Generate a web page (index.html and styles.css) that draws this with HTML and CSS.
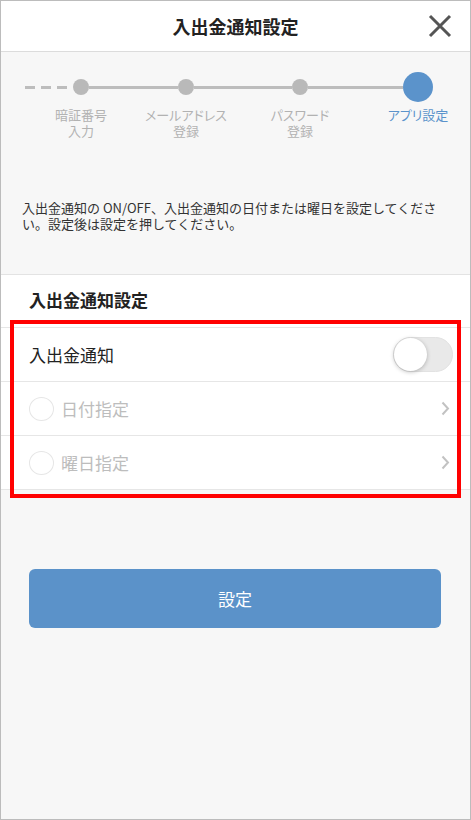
FILE: index.html
```html
<!DOCTYPE html>
<html lang="ja">
<head>
    <meta charset="UTF-8" />
    <meta name="viewport" content="width=device-width, initial-scale=1.0" />
    <title>入出金通知設定</title>
    <link rel="stylesheet" href="styles.css">
</head>
<body>
    <div class="screen">
        <!-- Header -->
        <header class="header">
            <h1 class="header-title">入出金通知設定</h1>
            <button class="close-btn" type="button" aria-label="閉じる">
                <svg width="24" height="24" viewBox="0 0 24 24">
                    <path d="M2 2 L22 22 M22 2 L2 22" stroke="#555" stroke-width="3" fill="none" />
                </svg>
            </button>
        </header>

        <!-- Steps -->
        <section class="steps">
            <div class="steps-track">
                <span class="track-dash"></span>
                <span class="step-dot"></span>
                <span class="track-line line-1"></span>
                <span class="step-dot"></span>
                <span class="track-line line-2"></span>
                <span class="step-dot"></span>
                <span class="track-line line-3"></span>
                <span class="step-dot step-dot-active"></span>
            </div>
            <div class="steps-labels">
                <div class="step-label"><span>暗証番号</span><span>入力</span></div>
                <div class="step-label"><span>メールアドレス</span><span>登録</span></div>
                <div class="step-label"><span>パスワード</span><span>登録</span></div>
                <div class="step-label step-label-active"><span>アプリ設定</span></div>
            </div>
            <p class="steps-text">入出金通知の ON/OFF、入出金通知の日付または曜日を設定してください。設定後は設定を押してください。</p>
        </section>

        <!-- Settings -->
        <section class="settings">
            <h2 class="settings-title">入出金通知設定</h2>
            <div class="settings-list">
                <div class="settings-row">
                    <span class="row-label">入出金通知</span>
                    <span class="toggle"><span class="toggle-knob"></span></span>
                </div>
                <div class="settings-row row-disabled">
                    <span class="radio"></span>
                    <span class="row-label">日付指定</span>
                    <svg class="chevron" width="9" height="15" viewBox="0 0 9 15">
                        <path d="M1.5 1.5 L7 7.5 L1.5 13.5" stroke="#c2c2c2" stroke-width="2" fill="none" />
                    </svg>
                </div>
                <div class="settings-row row-disabled">
                    <span class="radio"></span>
                    <span class="row-label">曜日指定</span>
                    <svg class="chevron" width="9" height="15" viewBox="0 0 9 15">
                        <path d="M1.5 1.5 L7 7.5 L1.5 13.5" stroke="#c2c2c2" stroke-width="2" fill="none" />
                    </svg>
                </div>
                <span class="highlight"></span>
            </div>
        </section>

        <div class="actions">
            <button class="btn-main" type="button">設定</button>
        </div>
    </div>
</body>
</html>
```

FILE: styles.css
```css
/* Global CSS */
*,
*::before,
*::after {
    box-sizing: border-box;
}

html,
body {
    margin: 0;
    padding: 0;
}

body {
    font-family: 'Noto Sans CJK JP', 'Noto Sans', sans-serif;
    color: #222;
    background: #fff;
}

.screen {
    width: 471px;
    height: 820px;
    border: 1px solid #bcbcbc;
    background-color: #f7f7f7;
    overflow: hidden;
}

/* Header */
.header {
    display: flex;
    align-items: center;
    justify-content: center;
    position: relative;
    height: 51px;
    background-color: #fff;
    border-bottom: 1px solid #dcdcdc;
}

.header-title {
    margin: 0;
    font-size: 18px;
    font-weight: 700;
    line-height: 1;
}

.close-btn {
    position: absolute;
    right: 18px;
    top: 13px;
    width: 24px;
    height: 24px;
    padding: 0;
    border: none;
    background: none;
}

.close-btn svg {
    display: block;
}

/* Steps */
.steps {
    padding: 20px 0 42px;
}

.steps-track {
    display: flex;
    align-items: center;
    height: 30px;
    padding-left: 24px;
}

.track-dash {
    width: 48px;
    height: 3px;
    background: repeating-linear-gradient(to right, #bdbdbd 0, #bdbdbd 10px, transparent 10px, transparent 16px);
}

.track-line {
    height: 3px;
    background-color: #bdbdbd;
}

.line-1 {
    width: 89px;
}

.line-2 {
    width: 98px;
}

.line-3 {
    width: 95px;
}

.step-dot {
    width: 16px;
    height: 16px;
    border-radius: 50%;
    background-color: #b9b9b9;
}

.step-dot-active {
    width: 30px;
    height: 30px;
    background-color: #5b93cb;
}

.steps-labels {
    display: grid;
    grid-template-columns: 122px 88px 140px 96px;
    padding-left: 19px;
    margin-top: 5px;
}

.step-label {
    display: flex;
    flex-direction: column;
    align-items: center;
    font-size: 13px;
    line-height: 16px;
    color: #b2b2b2;
    white-space: nowrap;
    font-feature-settings: "palt";
}

.step-label span {
    display: block;
    height: 16px;
}

.step-label-active {
    color: #5b93cb;
}

.steps-text {
    margin: 61px 0 0;
    padding: 0 20px 0 21px;
    font-size: 13px;
    line-height: 16px;
    color: #333;
}

/* Settings */
.settings {
    background-color: #fff;
    border-top: 1px solid #e3e3e3;
}

.settings-title {
    margin: 0;
    padding: 13px 28px 15px;
    font-size: 17px;
    font-weight: 700;
    line-height: 24px;
}

.settings-list {
    position: relative;
    border-top: 1px solid #e6e6e6;
}

.settings-row {
    display: flex;
    align-items: center;
    height: 54px;
    padding: 0 17px 0 28px;
    border-bottom: 1px solid #e6e6e6;
}

.row-label {
    flex: 1;
    font-size: 17px;
    line-height: 24px;
}

.row-disabled .row-label {
    color: #bdbdbd;
}

.radio {
    width: 25px;
    height: 24px;
    margin-right: 7px;
    border: 1.5px solid #e6e6e6;
    border-radius: 50%;
}

.chevron {
    display: block;
    margin-right: 3px;
}

.toggle {
    position: relative;
    width: 60px;
    height: 35px;
    border-radius: 18px;
    background-color: #e9e9e9;
    border: 1px solid #e2e2e2;
}

.toggle-knob {
    position: absolute;
    left: 0;
    top: 0;
    width: 33px;
    height: 33px;
    border-radius: 50%;
    background-color: #fff;
    box-shadow: 0 1px 4px rgba(0, 0, 0, 0.25);
}

.highlight {
    position: absolute;
    top: -8px;
    bottom: -8px;
    left: 9px;
    right: 9px;
    border: 4px solid #ff0000;
    pointer-events: none;
}

/* Button */
.actions {
    padding: 79px 28px 0;
}

.btn-main {
    display: block;
    width: 412px;
    height: 59px;
    border: none;
    border-radius: 6px;
    background-color: #5b92c9;
    color: #fff;
    font-family: 'Noto Sans CJK JP', 'Noto Sans', sans-serif;
    font-size: 17px;
}
```
